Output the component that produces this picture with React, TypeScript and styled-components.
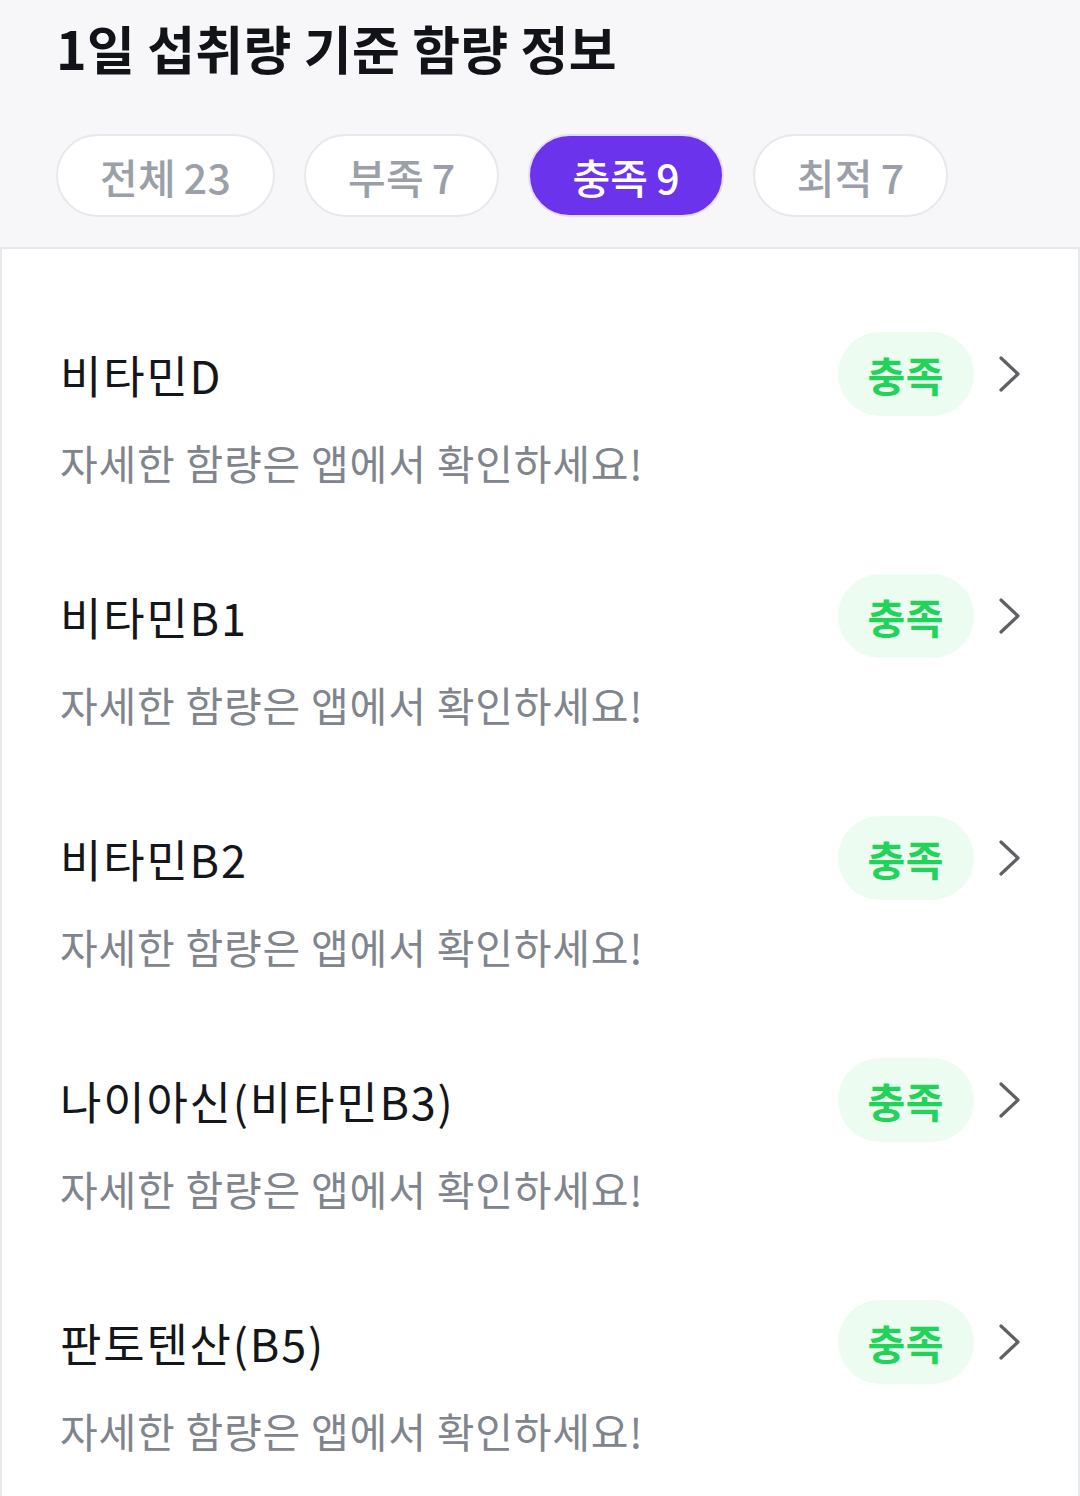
import React, { useState } from "react";
import styled, { createGlobalStyle } from "styled-components";

const GlobalStyle = createGlobalStyle`
  html, body {
    margin: 0;
    padding: 0;
    background: #f7f7f9;
    font-family: "Noto Sans CJK KR", "Noto Sans", sans-serif;
  }
  * {
    box-sizing: border-box;
  }
`;

const Page = styled.div`
  width: 1080px;
  min-height: 1496px;
  background: #f7f7f9;
  display: flex;
  flex-direction: column;
`;

const Header = styled.header`
  padding: 16px 56px 30px;
`;

const Title = styled.h1`
  margin: 0;
  font-size: 52px;
  line-height: 64px;
  font-weight: 700;
  letter-spacing: 0.3px;
  color: #111318;
`;

const TabRow = styled.div`
  display: flex;
  gap: 29px;
  margin-top: 54px;
`;

const Tab = styled.button<{ $active?: boolean }>`
  height: 83px;
  padding: 0 42px;
  border-radius: 42px;
  border: 2px solid ${(p) => (p.$active ? "#e6dcfb" : "#e6e8ec")};
  background: ${(p) => (p.$active ? "#6b33ec" : "#ffffff")};
  color: ${(p) => (p.$active ? "#ffffff" : "#9ba0a8")};
  font-family: inherit;
  font-size: 41px;
  font-weight: 500;
  letter-spacing: 0.2px;
  display: flex;
  align-items: center;
  gap: 8px;
  cursor: pointer;
`;

const Panel = styled.section`
  flex: 1;
  background: #ffffff;
  border: 2px solid #e6e8ec;
  border-bottom: none;
  padding: 83px 0 0;
  display: flex;
  flex-direction: column;
  gap: 86px;
`;

const Item = styled.div`
  padding: 0 56px 0 58px;
  display: flex;
  flex-direction: column;
  gap: 20px;
`;

const ItemRow = styled.div`
  display: flex;
  align-items: center;
`;

const ItemName = styled.div`
  flex: 1;
  font-size: 45px;
  font-weight: 400;
  letter-spacing: 1.8px;
  color: #14161a;
`;

const Badge = styled.span`
  height: 84px;
  padding: 0 30px;
  border-radius: 42px;
  background: #ecfcf0;
  color: #22d35a;
  font-size: 41px;
  font-weight: 700;
  letter-spacing: 0.5px;
  display: flex;
  align-items: center;
`;

const Chevron = styled.svg`
  width: 24px;
  height: 40px;
  margin-left: 24px;
  color: #5f6063;
`;

const Note = styled.p`
  margin: 0;
  font-size: 41px;
  line-height: 52px;
  font-weight: 400;
  letter-spacing: 0.8px;
  color: #80848c;
`;

const tabs = [
  { label: "전체", count: 23 },
  { label: "부족", count: 7 },
  { label: "충족", count: 9 },
  { label: "최적", count: 7 },
];

const nutrients = ["비타민D", "비타민B1", "비타민B2", "나이아신(비타민B3)", "판토텐산(B5)"];

function App() {
  const [active, setActive] = useState(2);

  return (
    <Page>
      <GlobalStyle />
      <Header>
        <Title>1일 섭취량 기준 함량 정보</Title>
        <TabRow>
          {tabs.map((t, i) => (
            <Tab key={t.label} $active={i === active} onClick={() => setActive(i)}>
              <span>{t.label}</span>
              <span>{t.count}</span>
            </Tab>
          ))}
        </TabRow>
      </Header>
      <Panel>
        {nutrients.map((name) => (
          <Item key={name}>
            <ItemRow>
              <ItemName>{name}</ItemName>
              <Badge>충족</Badge>
              <Chevron viewBox="0 0 24 40" fill="none">
                <path
                  d="M3 4 L20 20 L3 36"
                  stroke="currentColor"
                  strokeWidth="3.2"
                  strokeLinecap="round"
                  strokeLinejoin="round"
                />
              </Chevron>
            </ItemRow>
            <Note>자세한 함량은 앱에서 확인하세요!</Note>
          </Item>
        ))}
      </Panel>
    </Page>
  );
}

export default App;
